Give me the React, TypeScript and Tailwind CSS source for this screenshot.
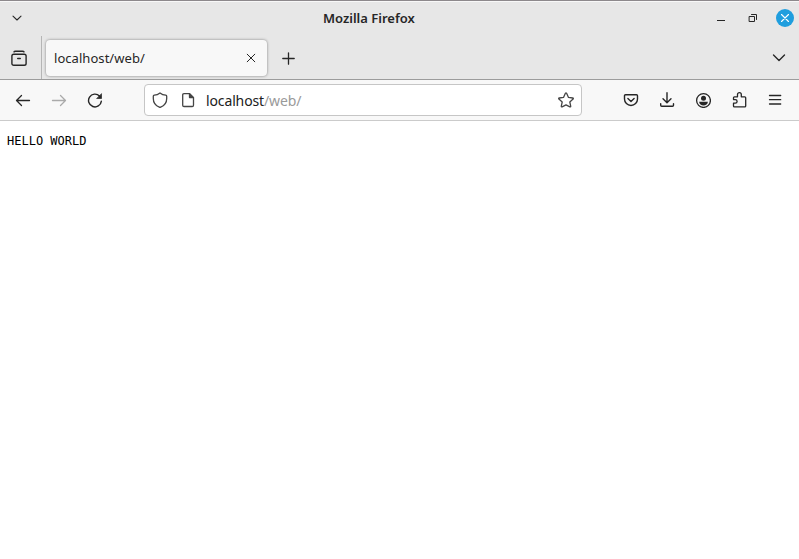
import type { ReactNode } from 'react';

function Icon({ children, w = 1.3, className = '' }: { children: ReactNode; w?: number; className?: string }) {
  return (
    <svg className={`size-4 shrink-0 ${className}`} viewBox="0 0 16 16" fill="none" stroke="currentColor" strokeWidth={w} strokeLinecap="round" strokeLinejoin="round">
      {children}
    </svg>
  );
}

function Button({ label, children, className = 'w-9' }: { label: string; children: ReactNode; className?: string }) {
  return (
    <button aria-label={label} className={`flex h-full shrink-0 items-center justify-center ${className}`}>
      {children}
    </button>
  );
}

function TitleBar() {
  return (
    <header className="flex h-9 items-center border-t border-[#8d898c] bg-[#e7e7e7] pb-px shadow-[inset_0_1px_0_#f8f8f8]">
      <div className="flex w-[323px] pl-[9px]">
        <Icon w={1.1}><path d="M4 6.2 8 10l4-3.8" /></Icon>
      </div>
      <h1 className="w-[92px] whitespace-nowrap text-[13px] font-semibold leading-4">Mozilla Firefox</h1>
      <div className="flex flex-1 items-center justify-end pr-[5px]">
        <Icon w={1} className="mr-4"><path d="M4 10.5h8" strokeLinecap="butt" /></Icon>
        <Icon w={1} className="mr-[15px]">
          <path d="M4.500 6.500h5v5h-5z M6.500 4.500h5V9.500" strokeLinejoin="miter" />
        </Icon>
        <svg className="size-[18px]" viewBox="0 0 18 18" fill="none">
          <circle cx="9" cy="9" r="9" fill="#1f9ede" />
          <path d="m5.500 5.500 7 7m0-7-7 7" stroke="white" strokeWidth="1.100" strokeLinecap="round" />
        </svg>
      </div>
    </header>
  );
}

function TabStrip() {
  return (
    <div className="flex h-11 items-center border-b border-[#9c9c9c] bg-[#e7e7e7]">
      <div className="flex h-full w-[42px] items-center border-r border-[#b5b5b5] pl-[11px]">
        <Icon w={1.400}>
          <rect x=".9" y="4.300" width="14.200" height="10.900" rx="1.800" />
          <path d="M3 1.900Q3.300 1.300 4.500 1.300h7q1.200 0 1.500.6M6.700 8.500h2.600" />
        </Icon>
      </div>
      <div className="ml-1 flex h-9 w-[221px] items-center rounded bg-[#f8f8f8] pl-2 pr-2 shadow-[0_0_3px_rgba(0,0,0,0.45)]">
        <span className="flex-1 whitespace-nowrap pt-0.5 text-[13px] tracking-[0.05px]">localhost/web/</span>
        <Icon w={1}><path d="m4.200 4.200 7.600 7.600m0-7.600-7.600 7.600" /></Icon>
      </div>
      <Button label="New tab" className="ml-[3px] w-9">
        <Icon w={1.300}><path d="M2.800 8.500h11.400M8.500 2.800v11.400" /></Icon>
      </Button>
      <Button label="List all tabs" className="ml-auto mr-0.5 w-9">
        <Icon w={1.400}><path d="m2.500 5 5.500 5.500L13.500 5" /></Icon>
      </Button>
    </div>
  );
}

function NavBar() {
  return (
    <nav className="flex h-[41px] items-center border-b border-[#cbcbcb] bg-[#f8f8f8]">
      <div className="flex h-full pl-[5px]">
        <Button label="Back">
          <Icon w={1.300}><path d="M14.500 8.500h-13M6.500 3.500l-5 5 5 5" /></Icon>
        </Button>
        <Button label="Forward">
          <Icon w={1.300} className="text-[#aaaaaa]"><path d="M1.500 8.500h13M9.500 3.500l5 5-5 5" /></Icon>
        </Button>
        <Button label="Reload">
          <Icon w={1.400}>
            <path d="M14.300 9.300A6.400 6.400 0 1 1 12.500 4l1 1" />
            <path d="M14.500 2v4.500H10z" fill="currentColor" strokeWidth=".7" />
          </Icon>
        </Button>
      </div>
      <div className="ml-[31px] flex h-8 w-[438px] items-center rounded border border-[#c6c6c6] bg-white pl-[7px] pr-[7px] text-[#454545]">
        <Icon>
          <path d="M8 .9c1.800 1.400 3.800 2.100 5.700 2.300q1 .1 1 1.100v2.200c0 4-2.400 7.200-6 8.600q-.7.300-1.400 0c-3.600-1.400-6-4.600-6-8.600V4.300q0-1 1-1.100C4.200 3 6.200 2.300 8 .9Z" />
        </Icon>
        <Icon className="ml-3">
          <path d="M4 1.600h5.500l4 4v7.600q0 1.300-1.300 1.300H4q-1.300 0-1.300-1.300V2.900q0-1.300 1.300-1.300Z" />
          <path d="M9.500 1.600v4h4z" fill="currentColor" />
        </Icon>
        <p className="ml-2.5 flex-1 whitespace-nowrap pt-0.5 text-[14px] leading-5 tracking-[-0.13px] text-[#9a9a9a]">
          <span className="text-[#202020]">localhost</span>/web/
        </p>
        <Icon>
          <path d="M7.400 1.300q.6-.9 1.200 0l1.900 4.100 4.200.6q1 .2.400 1l-3.300 3 .9 4.200q.1 1-.8.600L8 12.800l-3.900 2q-.9.400-.8-.6l.9-4.200-3.300-3q-.6-.8.4-1l4.200-.6Z" />
        </Icon>
      </div>
      <div className="ml-auto flex h-full pr-1.5">
        <Button label="Save to Pocket">
          <Icon w={1.400}>
            <path d="M2.500 2.700h11q1 0 1 1V7a6.500 6.500 0 0 1-13 0V3.700q0-1 1-1Z M4.900 6.600 8 9.600l3.100-3" />
          </Icon>
        </Button>
        <Button label="Downloads">
          <Icon w={1.400}><path d="M8 .8v9.800M4 6.800l4 4 4-4M1.700 11.700v1.500q0 1 1 1h10.800q1 0 1-1v-1.500" /></Icon>
        </Button>
        <Button label="Account">
          <Icon w={1.300}>
            <circle cx="8.500" cy="8.500" r="6.900" />
            <circle cx="8.500" cy="6.200" r="2.500" fill="currentColor" stroke="none" />
            <path d="M4.100 9.700h8.800c-.3 2.500-2 3.800-4.400 3.800s-4.100-1.300-4.400-3.800Z" fill="currentColor" stroke="none" />
          </Icon>
        </Button>
        <Button label="Extensions">
          <Icon w={1.300}>
            <path d="M6.500 4.800V2.600a1.900 1.900 0 0 1 3.800 0v2.200h3.400q1 0 1 1v8.100q0 1-1 1H3.500q-1 0-1-1v-2.700h1.800a1.800 1.800 0 0 0 0-3.600H2.500V5.800q0-1 1-1Z" />
          </Icon>
        </Button>
        <Button label="Menu">
          <Icon w={1.300}><path d="M2.500 3.500h11.200M2.500 7.700h11.200M2.500 12h11.200" /></Icon>
        </Button>
      </div>
    </nav>
  );
}

export default function App() {
  return (
    <div className="flex h-screen flex-col overflow-hidden bg-white font-['Noto_Sans',sans-serif] text-[#262626]">
      <TitleBar />
      <TabStrip />
      <NavBar />
      <main className="flex-1 px-[7px] pt-3">
        <pre className="font-['DejaVu_Sans_Mono',monospace] text-[12px] leading-4 text-black">HELLO WORLD</pre>
      </main>
    </div>
  );
}
